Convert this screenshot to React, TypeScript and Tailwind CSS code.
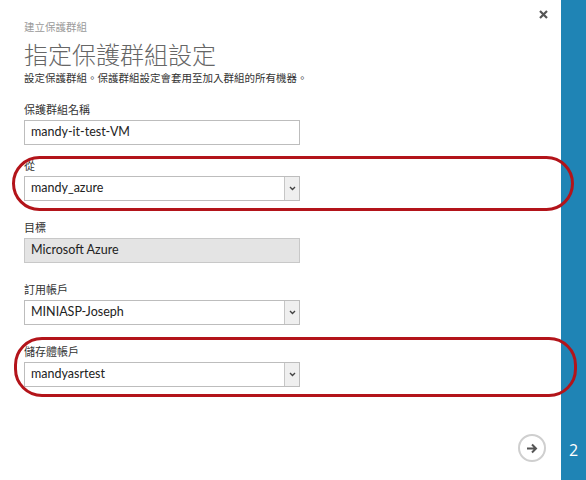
const font = "font-['Open_Sans','Noto_Sans_CJK_TC',sans-serif]";

function Chevron() {
  return (
    <span className="flex h-full w-[15px] items-center justify-center border-l border-[#c6c6c6] bg-[#efefef]">
      <svg width="7" height="5" viewBox="0 0 7 5">
        <path d="M1 1 L3.5 3.5 L6 1" fill="none" stroke="#444" strokeWidth="1.4" />
      </svg>
    </span>
  );
}

function Field({
  label,
  value,
  select,
  readOnly,
}: {
  label: string;
  value: string;
  select?: boolean;
  readOnly?: boolean;
}) {
  return (
    <div className="w-[276px]">
      <div className="mb-[4px] text-[11px] leading-[12px] text-[#333]">{label}</div>
      <div
        className={`flex h-[25px] items-center border ${
          readOnly ? "border-[#c8c8c8] bg-[#e4e4e4]" : "border-[#bdbdbd] bg-white"
        }`}
      >
        <span className="flex-1 pl-[6px] font-['Lato','Noto_Sans_CJK_TC',sans-serif] text-[12.5px] text-[#222]">
          {value}
        </span>
        {select && <Chevron />}
      </div>
    </div>
  );
}

function Circled({ children, inset }: { children: React.ReactNode; inset: string }) {
  return (
    <div className="relative">
      {children}
      <div className={`pointer-events-none absolute rounded-[28px] border-[3px] border-[#b3141a] ${inset}`} />
    </div>
  );
}

export default function App() {
  return (
    <div className={`flex h-[480px] w-[586px] bg-white ${font}`}>
      <div className="relative flex flex-1 flex-col pl-[24px]">
        <button className="absolute right-[13px] top-[10px] flex h-[9px] w-[9px] items-center justify-center">
          <svg width="9" height="9" viewBox="0 0 9 9">
            <path d="M1 1 L8 8 M8 1 L1 8" stroke="#555" strokeWidth="2.2" />
          </svg>
        </button>

        <div className="mt-[20px] text-[10.5px] leading-[14px] text-[#9a9a9a]">建立保護群組</div>
        <h1 className="mt-[6px] text-[24px] font-light leading-[30px] text-[#666]">指定保護群組設定</h1>
        <p className="mt-[1px] text-[10.5px] leading-[14px] text-[#333]">
          設定保護群組。保護群組設定會套用至加入群組的所有機器。
        </p>

        <div className="mt-[19px]">
          <Field label="保護群組名稱" value="mandy-it-test-VM" />
        </div>
        <div className="mt-[15px]">
          <Circled inset="-left-[12px] -right-[13px] -top-[4px] -bottom-[10px]">
            <Field label="從" value="mandy_azure" select />
          </Circled>
        </div>
        <div className="mt-[21px]">
          <Field label="目標" value="Microsoft Azure" readOnly />
        </div>
        <div className="mt-[21px]">
          <Field label="訂用帳戶" value="MINIASP-Joseph" select />
        </div>
        <div className="mt-[21px]">
          <Circled inset="-left-[10px] -right-[16px] -top-[9px] -bottom-[10px]">
            <Field label="儲存體帳戶" value="mandyasrtest" select />
          </Circled>
        </div>

        <div className="mb-[18px] mr-[15px] mt-auto flex justify-end">
          <button className="flex h-[28px] w-[28px] items-center justify-center rounded-full border-2 border-[#cfcfcf]">
            <svg width="12" height="11" viewBox="0 0 12 11">
              <path d="M1 5.5 H10 M6 1.5 L10 5.5 L6 9.5" fill="none" stroke="#555" strokeWidth="2" />
            </svg>
          </button>
        </div>
      </div>
      <div className="flex w-[25px] flex-col justify-end bg-[#1f84b5] pb-[20px]">
        <span className="text-center text-[16px] leading-[20px] text-white">2</span>
      </div>
    </div>
  );
}
